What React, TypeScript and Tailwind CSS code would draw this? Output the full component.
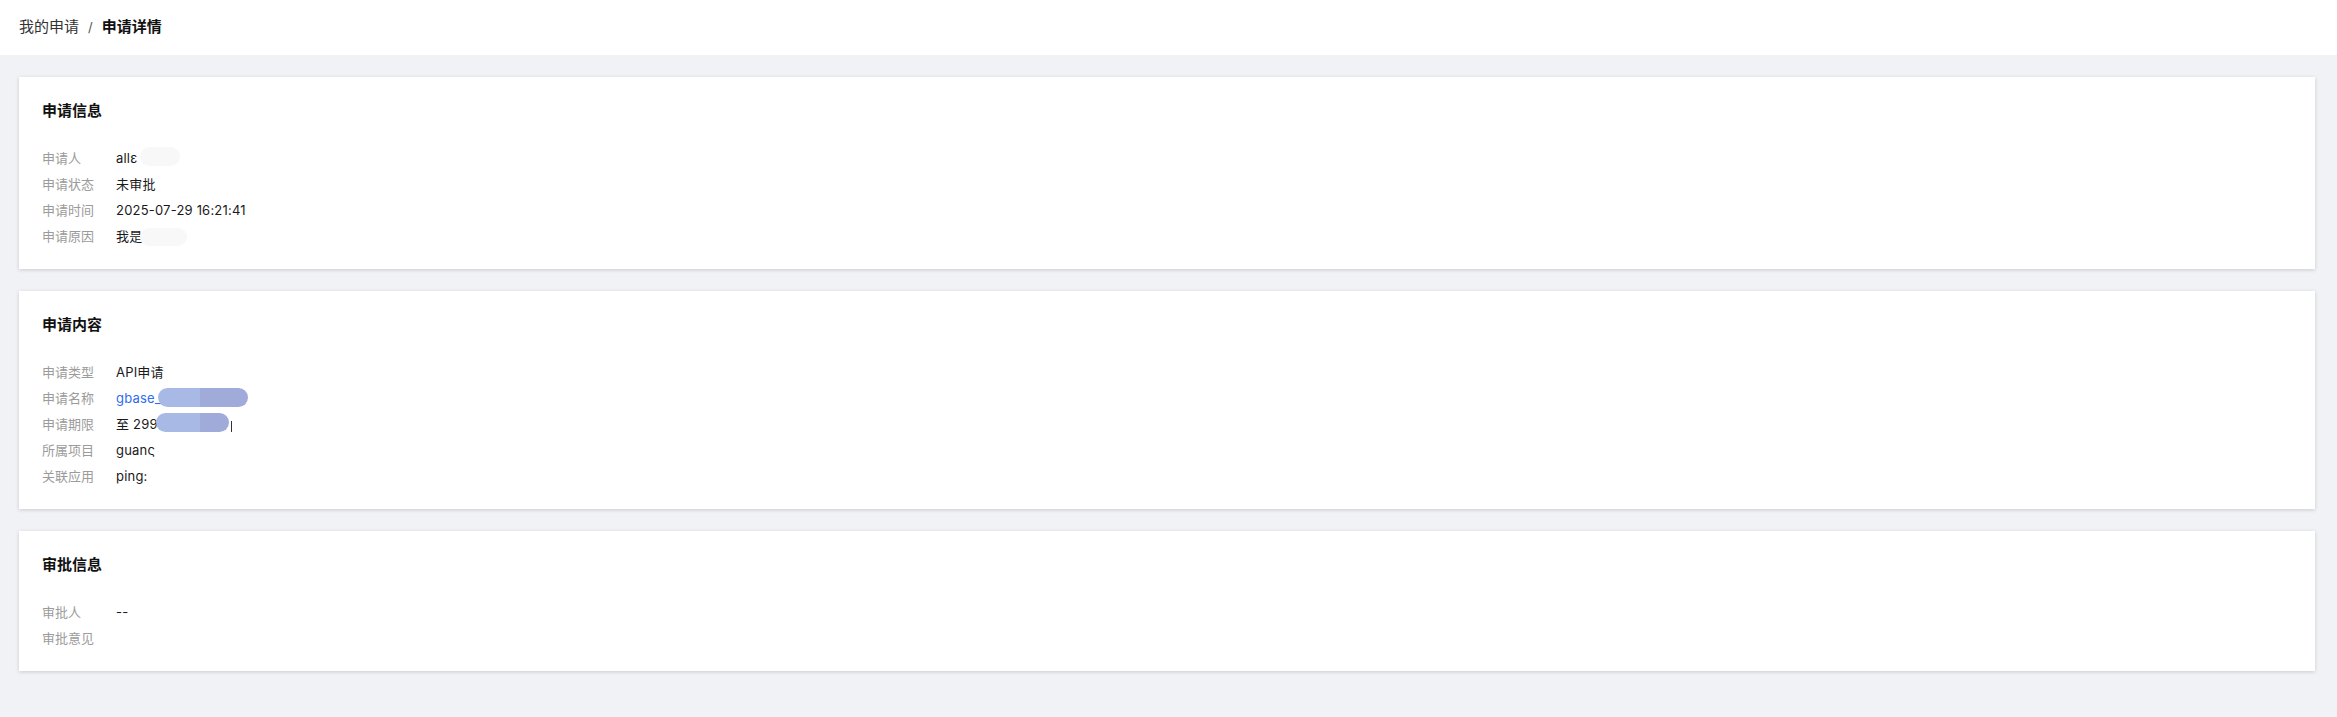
import React from "react";

type Row = { label: string; value: React.ReactNode };

function Card({ title, rows }: { title: string; rows: Row[] }) {
  return (
    <div className="bg-white shadow-[0_1px_4px_rgba(0,0,0,0.16)] pt-[23px] pb-[19px] px-[23px]">
      <div className="text-[15px] leading-[22px] font-semibold text-[#111]">{title}</div>
      <div className="mt-[24px] flex flex-col">
        {rows.map((r) => (
          <div key={r.label} className="flex h-[26px] items-center text-[13px]">
            <div className="w-[74px] shrink-0 text-[#9b9b9b]">{r.label}</div>
            <div className="relative flex h-[26px] items-center text-[#1a1a1a] tracking-[0.2px]">{r.value}</div>
          </div>
        ))}
      </div>
    </div>
  );
}

function Blob({ className }: { className: string }) {
  return <span className={"absolute rounded-full " + className} />;
}

export default function App() {
  return (
    <div className="min-h-screen bg-[#f1f2f6] font-['Inter','Noto_Sans_CJK_SC',sans-serif]">
      <div className="h-[55px] bg-white flex items-center pl-[19px] text-[15px]">
        <span className="text-[#333]">我的申请</span>
        <span className="mx-[9px] text-[#555] text-[13px]">/</span>
        <span className="font-semibold text-[#111]">申请详情</span>
      </div>
      <div className="pt-[22px] pl-[19px] pr-[22px] flex flex-col gap-[22px]">
        <Card
          title="申请信息"
          rows={[
            {
              label: "申请人",
              value: (
                <>
                  <span>allε</span>
                  <Blob className="left-[24px] top-[1px] w-[40px] h-[19px] bg-[#f8f8f9]" />
                </>
              ),
            },
            { label: "申请状态", value: "未审批" },
            { label: "申请时间", value: "2025-07-29 16:21:41" },
            {
              label: "申请原因",
              value: (
                <>
                  <span>我是</span>
                  <Blob className="left-[24px] top-[4px] w-[47px] h-[18px] bg-[#f8f8f9]" />
                </>
              ),
            },
          ]}
        />
        <Card
          title="申请内容"
          rows={[
            { label: "申请类型", value: "API申请" },
            {
              label: "申请名称",
              value: (
                <>
                  <span className="text-[#2f6cf0]">gbase_</span>
                  <span className="absolute left-[42px] top-[2px] w-[90px] h-[19px] rounded-full overflow-hidden flex">
                    <span className="w-[42px] h-full bg-[#a9b9e6]" />
                    <span className="flex-1 h-full bg-[#a1abd9]" />
                  </span>
                </>
              ),
            },
            {
              label: "申请期限",
              value: (
                <>
                  <span className="whitespace-pre">至 299</span>
                  <span className="absolute left-[40px] top-[1px] w-[73px] h-[19px] rounded-full overflow-hidden flex">
                    <span className="w-[44px] h-full bg-[#a9b9e6]" />
                    <span className="flex-1 h-full bg-[#a1abd9]" />
                  </span>
                  <span className="absolute left-[115px] top-[9px] w-[1px] h-[11px] bg-[#333]" />
                </>
              ),
            },
            { label: "所属项目", value: "guanς" },
            { label: "关联应用", value: "ping:" },
          ]}
        />
        <Card
          title="审批信息"
          rows={[
            { label: "审批人", value: "--" },
            { label: "审批意见", value: "" },
          ]}
        />
      </div>
    </div>
  );
}
